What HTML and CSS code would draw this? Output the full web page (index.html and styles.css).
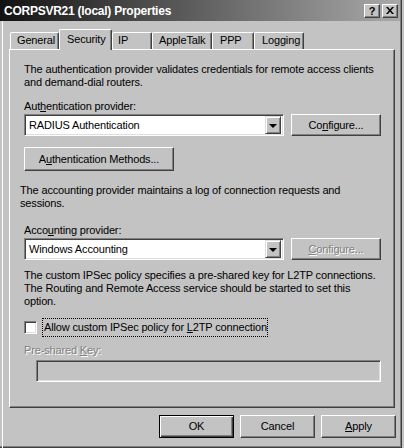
FILE: index.html
```html
<!DOCTYPE html>
<html>
<head>
<meta charset="utf-8">
<link rel="stylesheet" href="styles.css">
</head>
<body>
<div class="window">
  <div class="titlebar">
    <span class="title">CORPSVR21 (local) Properties</span>
    <div class="tbtns">
      <span class="tbtn help">?</span>
      <span class="tbtn close"><svg width="8" height="7" viewBox="0 0 8 7"><path d="M0 0h2l2 2.5L6 0h2L5 3.5 8 7H6L4 4.5 2 7H0l3-3.5z" fill="#000"/></svg></span>
    </div>
  </div>
  <div class="body">
    <div class="tabs">
      <div class="tab t-general">General</div>
      <div class="tab sel t-security">Security</div>
      <div class="tab t-ip">IP</div>
      <div class="tab t-apple">AppleTalk</div>
      <div class="tab t-ppp">PPP</div>
      <div class="tab t-log">Logging</div>
    </div>
    <div class="panel">
      <p class="para p1">The authentication provider validates credentials for remote access clients and demand-dial routers.</p>
      <div class="label l1">Aut<u>h</u>entication provider:</div>
      <div class="row r1">
        <div class="combo"><span class="ctext">RADIUS Authentication</span><span class="dd"><span class="tri"></span></span></div>
        <div class="btn cfg">Co<u>n</u>figure...</div>
      </div>
      <div class="btn methods">A<u>u</u>thentication Methods...</div>
      <p class="para p2">The accounting provider maintains a log of connection requests and sessions.</p>
      <div class="label l2">Acco<u>u</u>nting provider:</div>
      <div class="row r2">
        <div class="combo"><span class="ctext">Windows Accounting</span><span class="dd"><span class="tri"></span></span></div>
        <div class="btn cfg disabled"><span class="dis"><u>C</u>onfigure...</span></div>
      </div>
      <p class="para p3">The custom IPSec policy specifies a pre-shared key for L2TP connections. The Routing and Remote Access service should be started to set this option.</p>
      <div class="check">
        <span class="box"></span>
        <span class="clabel">Allow custom IPSec policy for <u>L</u>2TP connection</span>
      </div>
      <div class="label l3 dis">Pre-shared <u>K</u>ey:</div>
      <div class="textbox"></div>
    </div>
    <div class="footer">
      <div class="btn fbtn default">OK</div>
      <div class="btn fbtn">Cancel</div>
      <div class="btn fbtn"><u>A</u>pply</div>
    </div>
  </div>
</div>
</body>
</html>
```
FILE: styles.css
```css
* { box-sizing: border-box; }
html, body { margin: 0; padding: 0; background: #c3c3c3; }
body { width: 404px; height: 448px; overflow: hidden; font-family: "Liberation Sans", Arial, sans-serif; font-size: 11px; letter-spacing: -0.15px; color: #000; }

.window {
  width: 402px; height: 448px;
  background: #c3c3c3;
  border-right: 1px solid #404040;
  border-bottom: 1px solid #404040;
  box-shadow: inset -1px -1px 0 #808080;
  padding-right: 1px;
}

.titlebar {
  height: 21px; width: 400px;
  background: linear-gradient(to right, #121212 0%, #4a4a4a 35%, #a9a9a9 100%);
  display: flex; align-items: center; justify-content: space-between;
  padding: 0 2px 0 4px;
}
.title { color: #fff; font-weight: bold; font-size: 12px; letter-spacing: -0.25px; }
.tbtns { display: flex; gap: 2px; }
.tbtn {
  width: 16px; height: 14px;
  background: #c3c3c3;
  border-top: 1px solid #fff; border-left: 1px solid #fff;
  border-right: 1px solid #404040; border-bottom: 1px solid #404040;
  box-shadow: inset -1px -1px 0 #808080;
  display: flex; align-items: center; justify-content: center;
  font-weight: bold; font-size: 11px; line-height: 12px; letter-spacing: 0;
}

.body {
  margin-left: 2px; border-left: 1px solid #fff;
  height: 427px;
}

.tabs {
  display: flex; align-items: flex-end;
  padding-top: 8px; margin-left: 6px; padding-left: 1px;
}
.tab {
  height: 17px; line-height: 13px;
  padding: 1px 0 0 6px;
  border-top: 1px solid #fff; border-left: 1px solid #fff;
  border-right: 1px solid #404040;
  box-shadow: inset -1px 0 0 #808080;
  border-radius: 2px 2px 0 0;
  background: #c3c3c3;
  white-space: nowrap;
}
.tab.sel {
  height: 21px; margin-bottom: -1px; padding: 3px 0 0 7px;
  position: relative; z-index: 1;
}
.t-general { width: 49px; }
.t-security { width: 53px; }
.t-ip { width: 40px; padding-left: 5px; }
.t-apple { width: 60px; }
.t-ppp { width: 42px; padding-left: 7px; }
.t-log { width: 50px; padding-left: 7px; }

.panel {
  margin-left: 6px; width: 386px; height: 359px;
  border-top: 1px solid #fff; border-left: 1px solid #fff;
  border-right: 1px solid #404040; border-bottom: 1px solid #404040;
  box-shadow: inset -1px -1px 0 #808080;
  padding: 0 8px 0 14px;
}

.para { margin: 0; line-height: 13px; }
.p1 { margin-top: 13px; }
.p2 { margin-top: 13px; margin-left: -4px; width: 340px; }
.p3 { margin-top: 9px; width: 357px; }
.label { line-height: 13px; }
.l1 { margin-top: 11px; }
.l2 { margin-top: 14px; }
.l3 { margin-top: 8px; }

.row { display: flex; gap: 7px; margin-top: 1px; }
.combo {
  width: 260px; height: 22px;
  background: #fff;
  border-top: 1px solid #808080; border-left: 1px solid #808080;
  border-right: 1px solid #fff; border-bottom: 1px solid #fff;
  box-shadow: inset 1px 1px 0 #404040, inset -1px -1px 0 #dfdfdf;
  display: flex; align-items: center; justify-content: space-between;
  padding: 2px 2px 2px 4px;
}
.ctext { line-height: 13px; }
.dd {
  width: 16px; height: 18px;
  background: #c3c3c3;
  border-top: 1px solid #dfdfdf; border-left: 1px solid #dfdfdf;
  border-right: 1px solid #404040; border-bottom: 1px solid #404040;
  box-shadow: inset 1px 1px 0 #fff, inset -1px -1px 0 #808080;
  display: flex; align-items: center; justify-content: center;
}
.tri {
  width: 0; height: 0;
  border-left: 4px solid transparent; border-right: 4px solid transparent;
  border-top: 4px solid #000;
  margin-top: 1px;
}

.btn {
  background: #c3c3c3;
  border-top: 1px solid #fff; border-left: 1px solid #fff;
  border-right: 1px solid #404040; border-bottom: 1px solid #404040;
  box-shadow: inset -1px -1px 0 #808080;
  display: flex; align-items: center; justify-content: center;
  line-height: 13px; white-space: nowrap;
}
.cfg { width: 90px; height: 22px; }
.methods { width: 150px; height: 24px; margin-top: 11px; }
.dis { color: #808080; text-shadow: 1px 1px 0 #fff; }

.check { display: flex; align-items: center; height: 18px; margin-top: 10px; }
.box {
  width: 13px; height: 13px; background: #fff;
  border-top: 1px solid #808080; border-left: 1px solid #808080;
  border-right: 1px solid #fff; border-bottom: 1px solid #fff;
  box-shadow: inset 1px 1px 0 #404040, inset -1px -1px 0 #dfdfdf;
  margin-right: 5px;
}
.clabel { border: 1px dotted #000; padding: 2px 0 2px 1px; line-height: 13px; width: 226px; white-space: nowrap; }

.textbox {
  margin-top: 3px; margin-left: 12px;
  width: 345px; height: 22px;
  background: #c3c3c3;
  border-top: 1px solid #808080; border-left: 1px solid #808080;
  border-right: 1px solid #fff; border-bottom: 1px solid #fff;
  box-shadow: inset 1px 1px 0 #404040, inset -1px -1px 0 #dfdfdf;
}

.footer {
  display: flex; justify-content: flex-end; gap: 6px;
  margin-top: 7px; padding-right: 4px;
}
.fbtn { width: 75px; height: 23px; }
.fbtn.default {
  border: 1px solid #000;
  box-shadow: inset 1px 1px 0 #fff, inset -1px -1px 0 #404040, inset -2px -2px 0 #808080;
}
u { text-decoration: underline; text-underline-offset: 1px; }
```
